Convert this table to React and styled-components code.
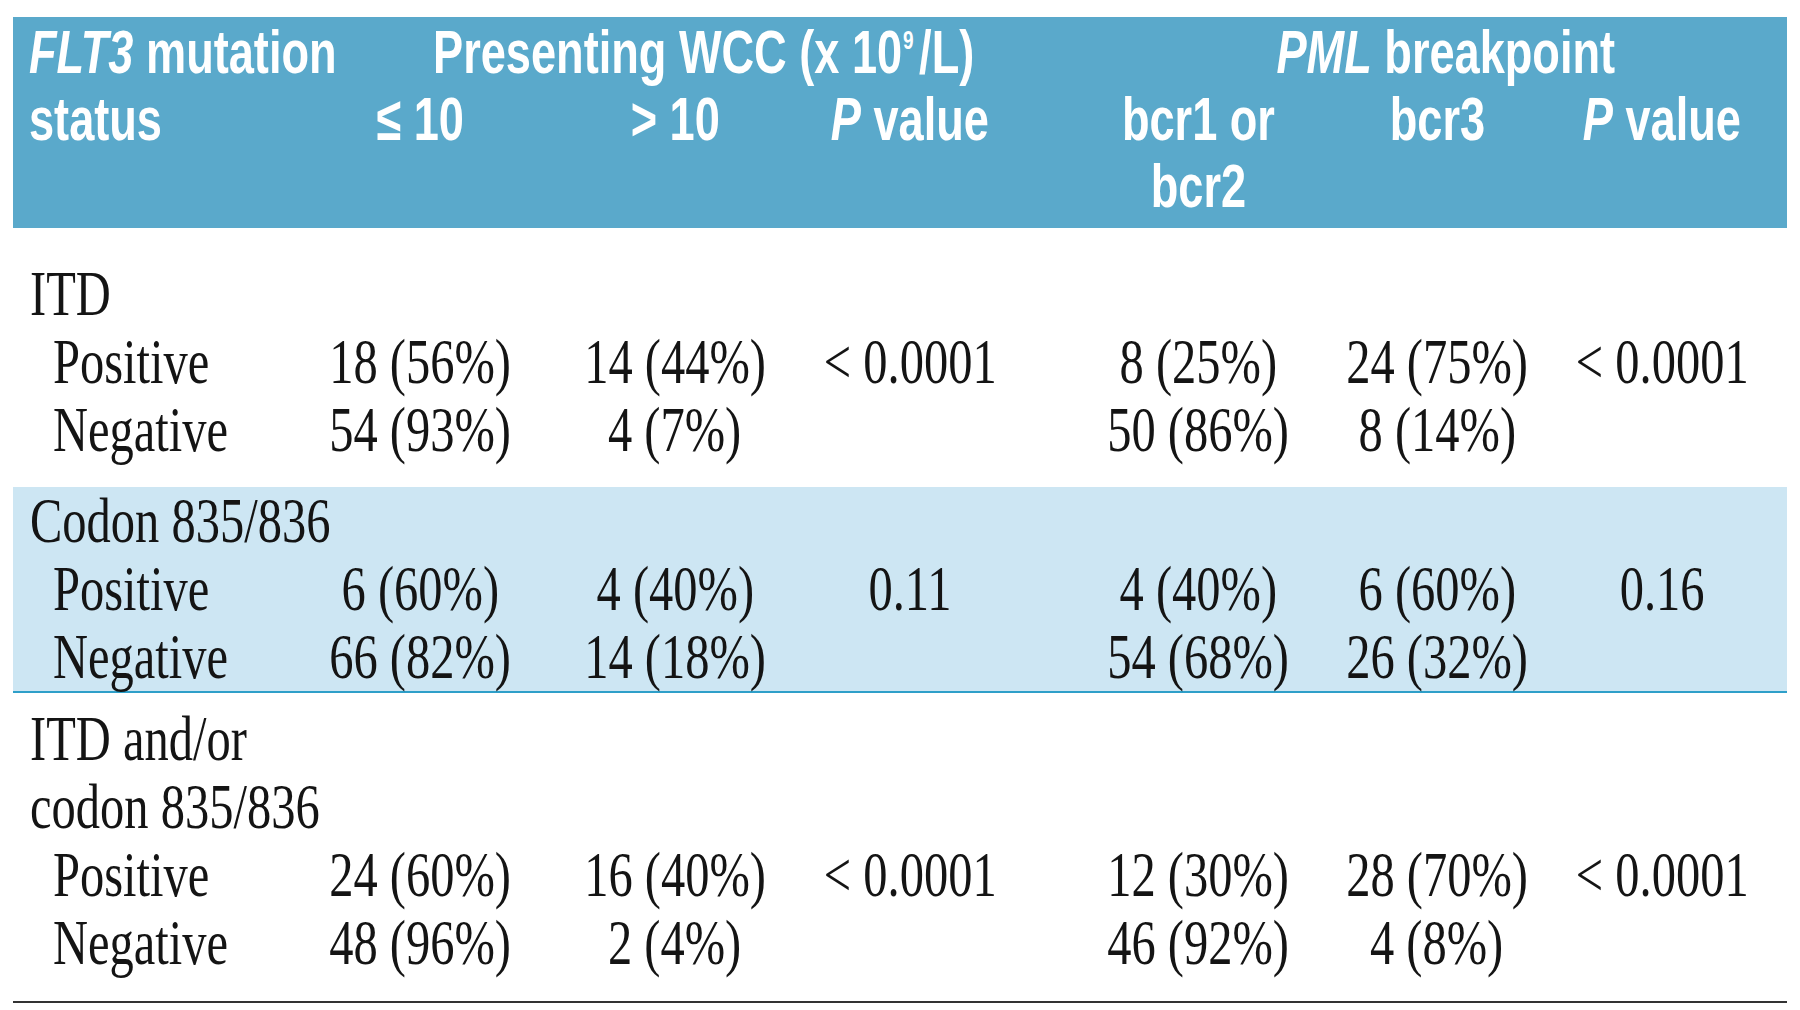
import React from "react";
import styled, { createGlobalStyle } from "styled-components";

const GlobalStyle = createGlobalStyle`
  html, body {
    margin: 0;
    padding: 0;
    background: #ffffff;
  }
  body {
    font-family: "Liberation Serif", "Times New Roman", serif;
  }
`;

// label | <=10 | >10 | P | bcr1/2 | bcr3 | P
const COLS = "237px 340px 170px 300px 277px 200px 250px";

const Page = styled.div`
  width: 1774px;
  padding: 17px 13px 0;
`;

const Head = styled.div`
  background: #5aa9cb;
  color: #ffffff;
  padding: 2px 0 8px;
  font-family: "Liberation Sans", Arial, sans-serif;
  font-weight: 700;
  font-size: 61px;
  line-height: 67px;
`;

const Row = styled.div`
  display: grid;
  grid-template-columns: ${COLS};
  align-items: start;
`;

const Cell = styled.div`
  display: flex;
  flex-direction: column;
  align-items: ${(p) => (p.$left ? "flex-start" : "center")};
  grid-column: ${(p) => p.$span || "auto"};
  padding-left: ${(p) => p.$indent || 0}px;
  white-space: nowrap;
  min-width: 0;
`;

const Txt = styled.span`
  display: inline-block;
  transform: scaleX(${(p) => p.$sx});
  transform-origin: ${(p) => (p.$left ? "left" : "center")} center;
`;

const I = styled.i`
  font-style: italic;
`;

const Sup = styled.sup`
  font-size: 0.42em;
  vertical-align: 0.95em;
  line-height: 0;
  margin: 0 0.3em 0 0.04em;
`;

const Section = styled.div`
  padding: ${(p) => p.$pad};
  background: ${(p) => (p.$band ? "#cde6f3" : "transparent")};
  border-bottom: ${(p) => p.$rule || "none"};
  color: #141414;
  font-size: 63px;
  line-height: 68px;
`;

const Line = styled(Row)`
  height: 68px;
`;

const HSX = 0.74;
const BSX = 0.77;

const H = ({ left, children }) => (
  <Txt $sx={HSX} $left={left}>
    {children}
  </Txt>
);

const B = ({ left, children }) => (
  <Txt $sx={BSX} $left={left}>
    {children}
  </Txt>
);

const sections = [
  {
    titles: ["ITD"],
    pad: "32px 0 23px",
    rows: [
      ["Positive", "18 (56%)", "14 (44%)", "< 0.0001", "8 (25%)", "24 (75%)", "< 0.0001"],
      ["Negative", "54 (93%)", "4 (7%)", "", "50 (86%)", "8 (14%)", ""],
    ],
  },
  {
    titles: ["Codon 835/836"],
    pad: "0",
    band: true,
    rule: "2px solid #2e9fc9",
    rows: [
      ["Positive", "6 (60%)", "4 (40%)", "0.11", "4 (40%)", "6 (60%)", "0.16"],
      ["Negative", "66 (82%)", "14 (18%)", "", "54 (68%)", "26 (32%)", ""],
    ],
  },
  {
    titles: ["ITD and/or", "codon 835/836"],
    pad: "12px 0 24px",
    rule: "2px solid #333333",
    rows: [
      ["Positive", "24 (60%)", "16 (40%)", "< 0.0001", "12 (30%)", "28 (70%)", "< 0.0001"],
      ["Negative", "48 (96%)", "2 (4%)", "", "46 (92%)", "4 (8%)", ""],
    ],
  },
];

const PValue = () => (
  <H>
    <I>P</I> value
  </H>
);

export default function App() {
  return (
    <Page>
      <GlobalStyle />
      <Head>
        <Row>
          <Cell $left $indent={16}>
            <H left>
              <I>FLT3</I> mutation
            </H>
          </Cell>
          <Cell $span="2 / 5" $indent={98}>
            <H>
              Presenting WCC (x 10<Sup>9</Sup>/L)
            </H>
          </Cell>
          <Cell $span="5 / 8" $indent={45}>
            <H>
              <I>PML</I> breakpoint
            </H>
          </Cell>
        </Row>
        <Row>
          <Cell $left $indent={16}>
            <H left>status</H>
          </Cell>
          <Cell>
            <H>≤ 10</H>
          </Cell>
          <Cell>
            <H>&gt; 10</H>
          </Cell>
          <Cell>
            <PValue />
          </Cell>
          <Cell>
            <H>bcr1 or</H>
            <H>bcr2</H>
          </Cell>
          <Cell>
            <H>bcr3</H>
          </Cell>
          <Cell>
            <PValue />
          </Cell>
        </Row>
      </Head>

      {sections.map((s, si) => (
        <Section key={si} $pad={s.pad} $band={s.band} $rule={s.rule}>
          {s.titles.map((t) => (
            <Line key={t}>
              <Cell $left $indent={17}>
                <B left>{t}</B>
              </Cell>
            </Line>
          ))}
          {s.rows.map((r) => (
            <Line key={r[0]}>
              <Cell $left $indent={40}>
                <B left>{r[0]}</B>
              </Cell>
              {r.slice(1).map((v, vi) => (
                <Cell key={vi}>{v ? <B>{v}</B> : null}</Cell>
              ))}
            </Line>
          ))}
        </Section>
      ))}
    </Page>
  );
}
